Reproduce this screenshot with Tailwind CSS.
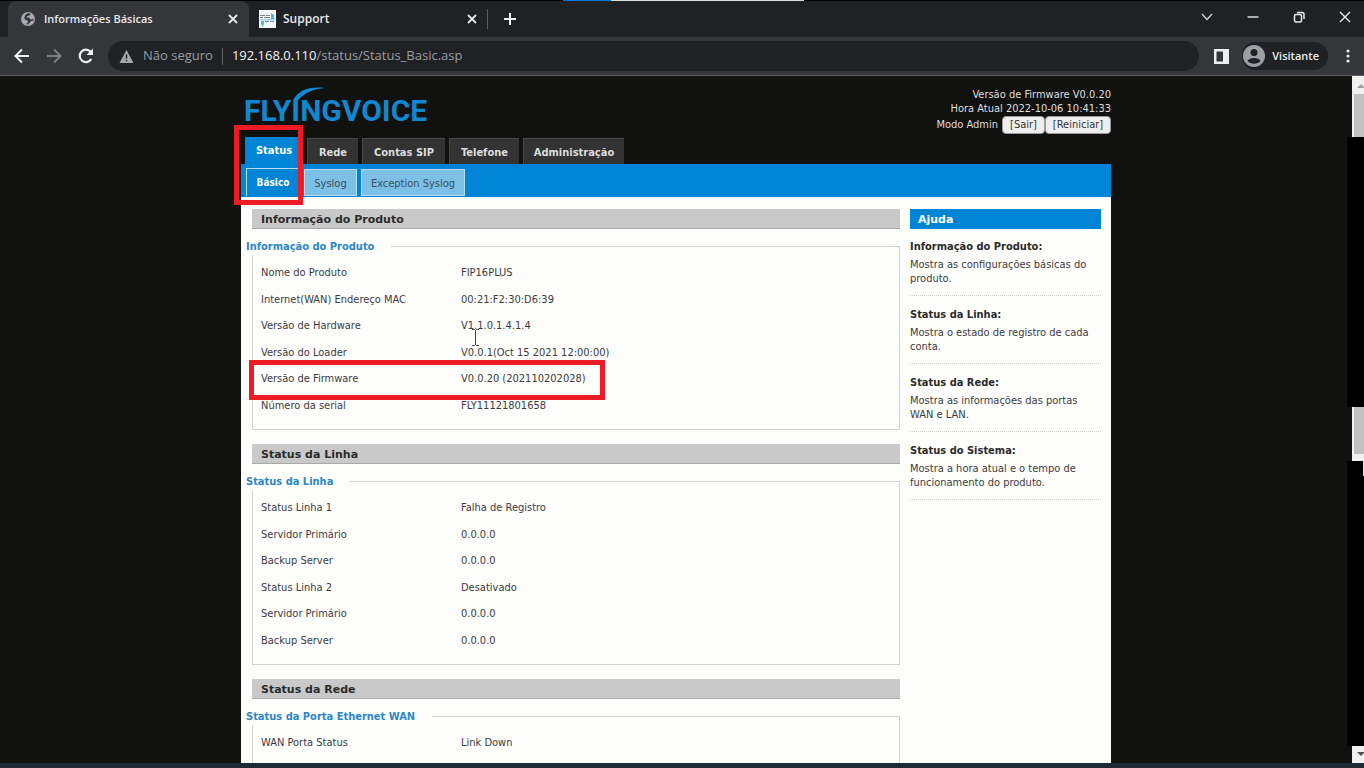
<!DOCTYPE html>
<html lang="pt-BR">
<head>
    <meta charset="UTF-8">
    <meta name="viewport" content="width=device-width, initial-scale=1.0">
    <title>Informações Básicas</title>
    <script src="https://cdn.jsdelivr.net/npm/@tailwindcss/browser@4"></script>
</head>
<body class="h-screen overflow-hidden flex flex-col bg-[#111110] font-['Open_Sans','Noto_Sans',sans-serif]">
    <!-- Top edge -->
    <div class="h-px shrink-0 bg-black flex justify-center pl-[3px]">
        <div class="w-12 bg-[#0078d7]"></div>
        <div class="w-[193px] bg-[#dcdcdc]"></div>
    </div>

    <!-- Tab strip -->
    <header class="shrink-0 bg-[#202124] text-[#e8eaed]">
        <div class="h-9 flex items-center pl-2">
            <div class="w-[241px] h-full flex items-center bg-[#35363a] rounded-t-lg pl-[13px] pr-[11px]">
                <svg class="w-[14px] h-[14px] shrink-0" viewBox="0 0 14 14">
                    <circle cx="7" cy="7" r="7" fill="#a3a9af"/>
                    <path d="M8.500 1.200 9.500 2.400 8 3.800 6 4 5.600 5.200 8.200 5.800 9.200 7.200 11 7.600 12.600 6.800 12.400 8.800 10 9 8.600 11 6.600 12.400 5.200 12 7 10 6.600 8.400 4.200 7.800 3.200 6 4 3.600 6 1.400z" fill="#35363a"/>
                </svg>
                <span class="flex-1 ml-[9px] text-[11px] font-semibold">Informações Básicas</span>
                <button aria-label="Fechar guia"><svg class="w-[10px] h-[10px]" viewBox="0 0 10 10" stroke="#e8eaed" stroke-width="1.8"><path d="M1 1l8 8M9 1l-8 8"/></svg></button>
            </div>
            <div class="w-[238px] h-full flex items-center pl-[10px] pr-[10px]">
                <svg class="w-[17px] h-[18px] shrink-0" viewBox="0 0 17 18">
                    <rect width="17" height="18" fill="#f4f6f8"/>
                    <path d="M1 5.500h5M7 5.500h4M1 7.500h3M5 7.500h6M6 11.500h4M11 11.500h4" stroke="#7b8288" stroke-width="1.200"/>
                    <path d="M12 3l3 2v3l1.500 1H12zM1 9.500h15v.8H1zM2 11h3v2l-1 4-2-3z" fill="#4fb3e6"/>
                </svg>
                <span class="flex-1 ml-[7px] text-[12px] font-semibold">Support</span>
                <button aria-label="Fechar guia"><svg class="w-[10px] h-[10px]" viewBox="0 0 10 10" stroke="#e8eaed" stroke-width="1.8"><path d="M1 1l8 8M9 1l-8 8"/></svg></button>
            </div>
            <div class="w-px h-5 bg-[#5a5b5f]"></div>
            <button class="ml-4" aria-label="Nova guia"><svg class="w-3 h-3" viewBox="0 0 12 12" stroke="#f1f3f4" stroke-width="2"><path d="M6 0v12M0 6h12"/></svg></button>
            <div class="ml-auto flex items-center pr-[13px] gap-[34px] h-full pb-[5px]">
                <button aria-label="Pesquisar guias"><svg class="w-3 h-3" viewBox="0 0 12 12" fill="none" stroke="#d4d6d9" stroke-width="1.3"><path d="M1 3l5 5.500 5-5.500"/></svg></button>
                <button aria-label="Minimizar"><svg class="w-3 h-3" viewBox="0 0 12 12" stroke="#e8eaed" stroke-width="1.4"><path d="M.5 6h11"/></svg></button>
                <button aria-label="Restaurar"><svg class="w-3 h-3" viewBox="0 0 12 12" fill="none" stroke="#e8eaed" stroke-width="1.5"><rect x="1.500" y="3.500" width="7" height="7.500" rx="1.500"/><path d="M4 1.500h5q2 0 2 2V8"/></svg></button>
                <button aria-label="Fechar"><svg class="w-3 h-3" viewBox="0 0 12 12" stroke="#e8eaed" stroke-width="1.4"><path d="M1 1l10 10M11 1L1 11"/></svg></button>
            </div>
        </div>

        <!-- Toolbar -->
        <div class="h-[39px] flex items-center bg-[#35363a] border-b border-[#5b5c5f] pl-[14px] pr-[14px]">
            <button aria-label="Voltar"><svg class="w-4 h-4" viewBox="0 0 16 16" fill="none" stroke="#f1f3f4" stroke-width="2"><path d="M15 8H2M8 1.500 1.500 8 8 14.500"/></svg></button>
            <button class="ml-4" aria-label="Avançar"><svg class="w-4 h-4" viewBox="0 0 16 16" fill="none" stroke="#7c7e82" stroke-width="2"><path d="M1 8h13M8 1.500 14.500 8 8 14.500"/></svg></button>
            <button class="ml-4" aria-label="Recarregar"><svg class="w-4 h-4" viewBox="0 0 16 16" fill="none" stroke="#f1f3f4" stroke-width="2.200"><path d="M13.300 11A6.200 6.200 0 1 1 12.600 3.800"/><path d="M15 .5V7H8.500z" fill="#f1f3f4" stroke="none"/></svg></button>
            <div class="ml-[14px] flex-1 h-[30px] flex items-center bg-[#202124] rounded-full pl-[11px] text-[13px]">
                <svg class="w-[15px] h-[13px]" viewBox="0 0 14 13"><path d="M7 0l7 13H0z" fill="#a5a9ae"/><path d="M7 4.500v4M7 9.800v1.500" stroke="#202124" stroke-width="1.500"/></svg>
                <span class="ml-[9px] text-[#999da2]">Não seguro</span>
                <span class="ml-[9px] w-px h-[17px] bg-[#5f6368]"></span>
                <span class="ml-[9px] text-[#999da2]"><span class="text-[#f1f3f4] font-medium">192.168.0.110</span>/status/Status_Basic.asp</span>
            </div>
            <button class="ml-[15px]" aria-label="Painel lateral"><svg class="w-[15px] h-[15px]" viewBox="0 0 15 15"><path d="M0 0h15v15H0zM2.500 2.500v10H9v-10z" fill="#eceef0" fill-rule="evenodd"/></svg></button>
            <button class="ml-[13px] h-7 flex items-center bg-[#202124] rounded-full pl-px pr-[9px] text-[11px] font-semibold">
                <svg class="w-[22px] h-[22px]" viewBox="0 0 22 22"><circle cx="11" cy="11" r="11" fill="#9aa0a6"/><circle cx="11" cy="7.500" r="3.500" fill="#202124"/><path d="M4.500 16c1.500-4 11.500-4 13 0-3 3.600-10 3.600-13 0z" fill="#202124"/></svg>
                <span class="ml-[7px]">Visitante</span>
            </button>
            <button class="ml-[18px]" aria-label="Menu"><svg class="w-1 h-[14px]" viewBox="0 0 4 14" fill="#e8eaed"><circle cx="2" cy="2" r="1.600"/><circle cx="2" cy="7" r="1.600"/><circle cx="2" cy="12" r="1.600"/></svg></button>
        </div>
    </header>

    <div class="flex-1 min-h-0 flex">
        <main class="flex-1 overflow-hidden text-[11px] leading-[14px] font-['DejaVu_Sans_Condensed','DejaVu_Sans',sans-serif]">
            <div class="relative w-full max-w-[870px] mx-auto">
                <div class="h-[62px] flex justify-between pl-[3px]">
                    <svg class="w-[200px] h-[46px] mt-[6px]" viewBox="0 0 200 46" role="img" aria-label="Flyingvoice">
                        <text x="0" y="39" font-family="Roboto, sans-serif" font-weight="700" font-size="30" fill="#1287d0">FLYINGVOICE</text>
                        <path d="M49 18C55 8 65 4 81 6 69 7 62 10 54 18z" fill="#1287d0"/>
                    </svg>
                    <div class="pt-3 text-right text-[#dedede]">
                        <p>Versão de Firmware V0.0.20</p>
                        <p>Hora Atual 2022-10-06 10:41:33</p>
                        <p class="flex items-center justify-end">
                            <span class="mr-1">Modo Admin</span>
                            <button class="h-[18px] w-[43px] bg-[#efefef] border border-[#9a9a9a] rounded-sm text-[#333]">[Sair]</button>
                            <button class="h-[18px] w-[66px] bg-[#efefef] border border-[#9a9a9a] rounded-sm text-[#333]">[Reiniciar]</button>
                        </p>
                    </div>
                </div>

                <nav class="flex items-end gap-1 h-[26px] pl-1 font-bold text-[#dcdcdc] text-center leading-[28px]">
                    <a href="#" class="w-[58px] h-[27px] bg-[#0084d6] text-white">Status</a>
                    <a href="#" class="w-[51px] h-[26px] bg-[#333] border-t border-l border-[#484848]">Rede</a>
                    <a href="#" class="w-[83px] h-[26px] bg-[#333] border-t border-l border-[#484848]">Contas SIP</a>
                    <a href="#" class="w-[70px] h-[26px] bg-[#333] border-t border-l border-[#484848]">Telefone</a>
                    <a href="#" class="w-[101px] h-[26px] bg-[#333] border-t border-l border-[#484848]">Administração</a>
                </nav>
                <nav class="flex items-end gap-1 h-[33px] pl-[5px] pb-px bg-[#0084d6] text-center leading-[28px] text-[#3b4f60]">
                    <a href="#" class="w-[54px] h-7 border border-b-0 border-[#b5ddf5] text-white text-[10px] font-bold">Básico</a>
                    <a href="#" class="w-[53px] h-[27px] bg-[#7cc0e6] border border-[#b5ddf5]">Syslog</a>
                    <a href="#" class="w-[104px] h-[27px] bg-[#7cc0e6] border border-[#b5ddf5]">Exception Syslog</a>
                </nav>

                <div class="flex gap-[10px] bg-[#fdfdfc] pt-3 pl-[11px] pr-[10px] text-[#3c3c3c]">
                    <div class="flex-1">
                        <section class="mb-[14px]">
                            <h2 class="h-5 pl-[9px] bg-[#c9c9c9] border-b border-[#a9a9a9] font-['DejaVu_Sans',sans-serif] font-bold leading-[22px] text-[#2b2b2b]">Informação do Produto</h2>
                            <fieldset class="mt-[8px] border border-[#d2d2d2] pt-[5px] pb-[10px] pl-2">
                                <legend class="-ml-[15px] pt-[2px] pr-[17px] bg-[#fdfdfc] font-bold leading-4 text-[#2b87c8]">Informação do Produto</legend>
                                <table class="w-full">
                                    <tbody>
                                        <tr class="odd:h-[26px] even:h-[27px]"><td class="w-[200px]">Nome do Produto</td><td>FIP16PLUS</td></tr>
                                        <tr class="odd:h-[26px] even:h-[27px]"><td>Internet(WAN) Endereço MAC</td><td>00:21:F2:30:D6:39</td></tr>
                                        <tr class="odd:h-[26px] even:h-[27px]"><td>Versão de Hardware</td><td>V1.1.0.1.4.1.4</td></tr>
                                        <tr class="odd:h-[26px] even:h-[27px]"><td>Versão do Loader</td><td>V0.0.1(Oct 15 2021 12:00:00)</td></tr>
                                        <tr class="odd:h-[26px] even:h-[27px]"><td>Versão de Firmware</td><td>V0.0.20 (202110202028)</td></tr>
                                        <tr class="odd:h-[26px] even:h-[27px]"><td>Número da serial</td><td>FLY11121801658</td></tr>
                                    </tbody>
                                </table>
                            </fieldset>
                        </section>

                        <section class="mb-[14px]">
                            <h2 class="h-5 pl-[9px] bg-[#c9c9c9] border-b border-[#a9a9a9] font-['DejaVu_Sans',sans-serif] font-bold leading-[22px] text-[#2b2b2b]">Status da Linha</h2>
                            <fieldset class="mt-[8px] border border-[#d2d2d2] pt-[5px] pb-[10px] pl-2">
                                <legend class="-ml-[15px] pt-[2px] pr-[17px] bg-[#fdfdfc] font-bold leading-4 text-[#2b87c8]">Status da Linha</legend>
                                <table class="w-full">
                                    <tbody>
                                        <tr class="odd:h-[26px] even:h-[27px]"><td class="w-[200px]">Status Linha 1</td><td>Falha de Registro</td></tr>
                                        <tr class="odd:h-[26px] even:h-[27px]"><td>Servidor Primário</td><td>0.0.0.0</td></tr>
                                        <tr class="odd:h-[26px] even:h-[27px]"><td>Backup Server</td><td>0.0.0.0</td></tr>
                                        <tr class="odd:h-[26px] even:h-[27px]"><td>Status Linha 2</td><td>Desativado</td></tr>
                                        <tr class="odd:h-[26px] even:h-[27px]"><td>Servidor Primário</td><td>0.0.0.0</td></tr>
                                        <tr class="odd:h-[26px] even:h-[27px]"><td>Backup Server</td><td>0.0.0.0</td></tr>
                                    </tbody>
                                </table>
                            </fieldset>
                        </section>

                        <section class="mb-[14px]">
                            <h2 class="h-5 pl-[9px] bg-[#c9c9c9] border-b border-[#a9a9a9] font-['DejaVu_Sans',sans-serif] font-bold leading-[22px] text-[#2b2b2b]">Status da Rede</h2>
                            <fieldset class="mt-[8px] border border-[#d2d2d2] pt-[5px] pb-[10px] pl-2">
                                <legend class="-ml-[15px] pt-[2px] pr-[17px] bg-[#fdfdfc] font-bold leading-4 text-[#2b87c8]">Status da Porta Ethernet WAN</legend>
                                <table class="w-full">
                                    <tbody>
                                        <tr class="odd:h-[26px] even:h-[27px]"><td class="w-[200px]">WAN Porta Status</td><td>Link Down</td></tr>
                                    </tbody>
                                </table>
                            </fieldset>
                        </section>
                    </div>

                    <!-- Help column -->
                    <aside class="w-[191px] shrink-0">
                        <h2 class="h-5 pl-2 bg-[#0084d6] font-['DejaVu_Sans',sans-serif] font-bold leading-[22px] text-white">Ajuda</h2>
                        <div class="pt-2 pb-[9px] border-b border-dotted border-[#cfcfcf]">
                            <h3 class="mb-px font-bold leading-5 text-[#2b2b2b]">Informação do Produto:</h3>
                            <p>Mostra as configurações básicas do produto.</p>
                        </div>
                        <div class="pt-[9px] pb-[9px] border-b border-dotted border-[#cfcfcf]">
                            <h3 class="mb-px font-bold leading-5 text-[#2b2b2b]">Status da Linha:</h3>
                            <p>Mostra o estado de registro de cada conta.</p>
                        </div>
                        <div class="pt-[9px] pb-[9px] border-b border-dotted border-[#cfcfcf]">
                            <h3 class="mb-px font-bold leading-5 text-[#2b2b2b]">Status da Rede:</h3>
                            <p>Mostra as informações das portas WAN e LAN.</p>
                        </div>
                        <div class="pt-[9px] pb-[9px] border-b border-dotted border-[#cfcfcf]">
                            <h3 class="mb-px font-bold leading-5 text-[#2b2b2b]">Status do Sistema:</h3>
                            <p>Mostra a hora atual e o tempo de funcionamento do produto.</p>
                        </div>
                    </aside>
                </div>

                <!-- Red highlights and text cursor over the page -->
                <div class="absolute -left-[7px] top-[49px] w-[69px] h-20 border-[5px] border-[#ed1c24]"></div>
                <div class="absolute left-2 top-[284px] w-[356px] h-10 border-[5px] border-[#ed1c24]"></div>
                <svg class="absolute left-[231px] top-[253px] w-[7px] h-[17px]" viewBox="0 0 7 17" fill="none" stroke="#444"><path d="M0 .5h2.500l1 1 1-1H7M3.500 1v15M0 16.500h2.500l1-1 1 1H7"/></svg>
            </div>
        </main>

        <!-- Scrollbar, partly blacked out -->
        <div class="w-3 shrink-0 flex flex-col">
            <div class="h-[61px] bg-[#f1f1f1] flex flex-col">
                <svg class="w-3 h-[18px]" viewBox="0 0 12 18"><path d="M5 12l4-4 4 4z" fill="#a0a0a0"/></svg>
                <div class="flex-1 ml-[2px] bg-[#c1c1c1]"></div>
            </div>
            <div class="h-[270px] -ml-[5px] bg-black"></div>
            <div class="h-[54px] pl-[2px] pb-[7px] bg-[#f1f1f1]"><div class="h-full bg-[#c1c1c1]"></div></div>
            <div class="flex-1 -ml-[5px] bg-black flex justify-end"><div class="w-px h-[15px] bg-[#e4e4e4]"></div></div>
            <div class="h-[17px] bg-[#f1f1f1]"><svg class="w-3 h-[17px]" viewBox="0 0 12 17"><path d="M5 6l4 4 4-4z" fill="#505050"/></svg></div>
        </div>
    </div>

    <footer class="h-[5px] shrink-0 bg-[#1b2b38]"></footer>
</body>
</html>
